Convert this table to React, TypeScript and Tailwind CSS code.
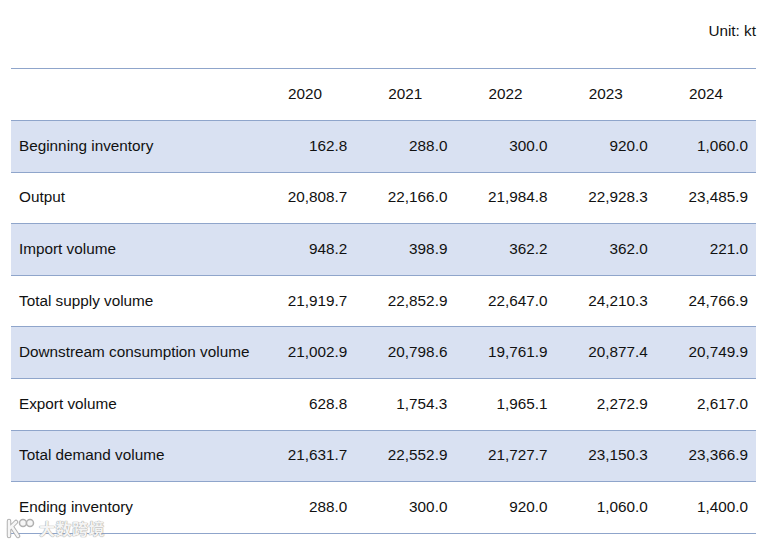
const years = ["2020", "2021", "2022", "2023", "2024"];

const rows = [
  { label: "Beginning inventory", values: ["162.8", "288.0", "300.0", "920.0", "1,060.0"] },
  { label: "Output", values: ["20,808.7", "22,166.0", "21,984.8", "22,928.3", "23,485.9"] },
  { label: "Import volume", values: ["948.2", "398.9", "362.2", "362.0", "221.0"] },
  { label: "Total supply volume", values: ["21,919.7", "22,852.9", "22,647.0", "24,210.3", "24,766.9"] },
  { label: "Downstream consumption volume", values: ["21,002.9", "20,798.6", "19,761.9", "20,877.4", "20,749.9"] },
  { label: "Export volume", values: ["628.8", "1,754.3", "1,965.1", "2,272.9", "2,617.0"] },
  { label: "Total demand volume", values: ["21,631.7", "22,552.9", "21,727.7", "23,150.3", "23,366.9"] },
  { label: "Ending inventory", values: ["288.0", "300.0", "920.0", "1,060.0", "1,400.0"] },
];

function Watermark() {
  return (
    <div className="absolute left-[5px] top-[517px] flex items-center gap-[2px] pointer-events-none select-none">
      <svg width="32" height="22" viewBox="0 0 32 22" fill="none">
        <path d="M4 4 L4 19 M4 12 L11 5 M7 10 L13 19" stroke="#b0b0b0" strokeWidth="4.5" strokeLinecap="round" />
        <path d="M4 4 L4 19 M4 12 L11 5 M7 10 L13 19" stroke="#f6f6f6" strokeWidth="2.5" strokeLinecap="round" />
        <circle cx="18" cy="6" r="3.5" stroke="#b0b0b0" strokeWidth="1.5" fill="#f6f6f6" />
        <circle cx="25" cy="6" r="3.5" stroke="#b0b0b0" strokeWidth="1.5" fill="#f6f6f6" />
      </svg>
      <span className="font-['Noto_Sans_CJK_SC',sans-serif] text-[16px] font-bold leading-none tracking-[0.5px] text-[#f4f4f4] [text-shadow:0_0_1px_#999,0_0_1px_#999]">
        大数跨境
      </span>
    </div>
  );
}

export default function App() {
  return (
    <div className="relative w-[768px] h-[545px] bg-white pl-[11px] pr-[12px] font-['Liberation_Sans',Arial,sans-serif] text-[15.3px] text-[#111]">
      <div className="h-[68px] flex justify-end pt-[21px] leading-[20px]">Unit: kt</div>

      <div className="border-t border-[#8fa5cb]">
        <div className="grid grid-cols-[244px_repeat(5,1fr)] h-[52px] border-b border-[#8fa5cb] items-center">
          <div />
          {years.map((y) => (
            <div key={y} className="text-center">{y}</div>
          ))}
        </div>
        {rows.map((r, i) => (
          <div
            key={r.label}
            className={`grid grid-cols-[244px_repeat(5,1fr)] h-[51.6px] border-b border-[#8fa5cb] items-center ${
              i % 2 === 0 ? "bg-[#d9e1f2]" : "bg-white"
            }`}
          >
            <div className="pl-2 whitespace-nowrap">{r.label}</div>
            {r.values.map((v, j) => (
              <div key={j} className="text-right pr-2">{v}</div>
            ))}
          </div>
        ))}
      </div>

      <Watermark />
    </div>
  );
}
